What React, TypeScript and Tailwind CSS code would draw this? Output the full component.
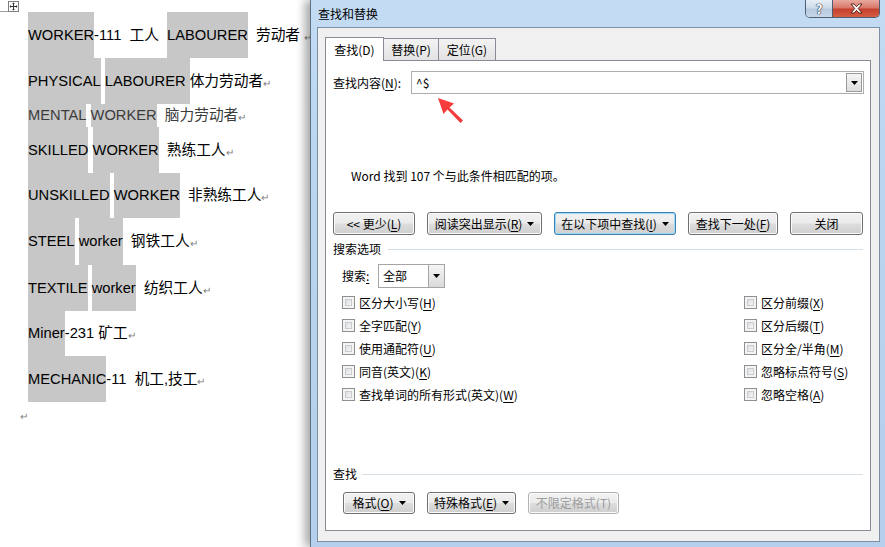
import clsx from "clsx";
import type { ReactNode } from "react";

type Part = [string, boolean];

const rows: { h: string; gray?: boolean; parts: Part[] }[] = [
  { h: "h-[46px]", parts: [["WORKER", true], ["-111  工人  ", false], ["LABOURER", true], ["  劳动者 ", false]] },
  { h: "h-[46px]", parts: [["PHYSICAL", true], [" ", false], ["LABOURER ", true], ["体力劳动者", false]] },
  { h: "h-[23px]", gray: true, parts: [["MENTAL", true], [" ", false], ["WORKER", true], ["  脑力劳动者", false]] },
  { h: "h-[46px]", parts: [["SKILLED", true], [" ", false], ["WORKER", true], ["  熟练工人", false]] },
  { h: "h-[45px]", parts: [["UNSKILLED", true], [" ", false], ["WORKER", true], ["  非熟练工人", false]] },
  { h: "h-[47px]", parts: [["STEEL", true], [" ", false], ["worker", true], ["  钢铁工人", false]] },
  { h: "h-[46px]", parts: [["TEXTILE", true], [" ", false], ["worker", true], ["  纺织工人", false]] },
  { h: "h-[45px]", parts: [["Miner", true], ["-231 矿工", false]] },
  { h: "h-[46px]", parts: [["MECHANIC", true], ["-11  机工,技工", false]] },
];

const Mark = () => <span className="translate-y-[2px] text-[10px] text-[#808080]">↵</span>;

const U = ({ c }: { c: string }) => <span className="underline underline-offset-[2px]">{c}</span>;

const Tri = () => (
  <svg width="7" height="4" viewBox="0 0 7 4" className="fill-black">
    <path d="M0 0h7L3.5 4z" />
  </svg>
);

function Btn({
  children,
  className,
  focused,
  disabled,
}: {
  children: ReactNode;
  className?: string;
  focused?: boolean;
  disabled?: boolean;
}) {
  return (
    <div
      className={clsx(
        "flex items-center justify-center gap-[5px] rounded-[3px] border bg-[linear-gradient(#f2f2f2,#ebebeb_48%,#dddddd_52%,#cfcfcf)] text-[12px] leading-[16px]",
        focused
          ? "border-[#3c7fb1] shadow-[inset_0_0_0_1px_#9bdcf9]"
          : "border-[#707070] shadow-[inset_0_0_0_1px_#fbfbfb]",
        disabled ? "border-[#adb2b5] text-[#9d9d9d]" : "text-black",
        className
      )}
    >
      {children}
    </div>
  );
}

function Check({ children }: { children: ReactNode }) {
  return (
    <div className="flex h-[23px] items-center gap-[4px]">
      <div className="h-[13px] w-[13px] border border-[#8e8f8f] bg-[#f4f4f4] p-[2px]">
        <div className="h-full w-full border border-[#c9cbcf] bg-[linear-gradient(135deg,#dcdee2,#f7f7f7)]" />
      </div>
      <span>{children}</span>
    </div>
  );
}

function Document() {
  return (
    <div className="h-[547px] w-[310px] shrink-0 overflow-hidden bg-white font-['Liberation_Sans','Noto_Sans_CJK_SC',sans-serif] text-[14.7px] text-black">
      <div className="flex h-[12px] items-start">
        <div className="mt-[11px] h-px w-[8px] bg-[#a0a0a0]" />
        <svg width="11" height="11" viewBox="0 0 11 11" className="mt-[1px]">
          <rect x="0.5" y="0.5" width="10" height="10" fill="white" stroke="#7f7f7f" />
          <path d="M5.5 2v7M2 5.5h7" stroke="#333" strokeWidth="1" />
          <path d="M5.5 1.5l-1.5 1.5h3zM5.5 9.5l-1.5-1.5h3zM1.5 5.5l1.5-1.5v3zM9.5 5.5l-1.5-1.5v3z" fill="#333" />
        </svg>
      </div>
      <div className="pl-[28px]">
        {rows.map((r, i) => (
          <div key={i} className={clsx("flex whitespace-pre", r.h, r.gray && "text-[#3c3c3c]")}>
            {r.parts.map(([t, hl], j) => (
              <span key={j} className={clsx("flex items-center", hl && "bg-[#c7c7c7]")}>
                <span className="whitespace-pre">{t}</span>
                {j === r.parts.length - 1 && <Mark />}
              </span>
            ))}
          </div>
        ))}
      </div>
      <div className="flex h-[24px] items-center pl-[20px]">
        <Mark />
      </div>
    </div>
  );
}

function Dialog() {
  return (
    <div className="relative flex h-[547px] w-[575px] shrink-0 flex-col border-l border-[#5d7189] bg-[linear-gradient(180deg,#c3dcf4,#bad3ee_40%,#b5cfec)] font-['Noto_Sans_CJK_SC','Noto_Sans',sans-serif] text-[12px] leading-[16px] text-black shadow-[-5px_0_9px_0_rgba(0,0,0,0.35)]">
      <div className="flex h-[27px] shrink-0 items-start">
        <div className="pl-[7px] leading-[27px]">查找和替换</div>
        <div className="ml-auto mr-[5px] flex h-[18px] overflow-hidden rounded-b-[5px] border border-t-0 border-[#4f5f74]">
          <div className="flex w-[27px] items-center justify-center border-r border-[#4f5f74] bg-[linear-gradient(#e6eef7,#cfdbe9_45%,#b8c9dd_55%,#c7d6e7)] text-[13px] font-bold leading-none text-white [text-shadow:0_0_1px_#1d2a3a,0_0_1px_#1d2a3a,0_0_1px_#1d2a3a]">
            ?
          </div>
          <div className="flex w-[46px] items-center justify-center bg-[linear-gradient(#e9a99f,#d9786b_45%,#c5412f_55%,#d65d42)]">
            <svg width="15" height="11" viewBox="0 0 15 11">
              <path
                d="M2 1h3l2.5 2.7L10 1h3L9.2 5.5 13 10h-3L7.5 7.3 5 10H2l3.8-4.5z"
                fill="white"
                stroke="#4a1810"
                strokeWidth="0.9"
                strokeLinejoin="round"
              />
            </svg>
          </div>
        </div>
      </div>
      <div className="mb-[5px] ml-[6px] mr-[5px] flex flex-1 flex-col border border-[#7e8ea3] bg-[#f0f0f0] pb-[10px] pl-[7px] pr-[8px] pt-[9px]">
        <div className="flex items-end">
          <div className="relative z-10 -mb-px flex h-[24px] w-[59px] items-center justify-center border border-b-0 border-[#898c95] bg-white">
            查找(D)
          </div>
          <div className="flex h-[22px] w-[55px] items-center justify-center border border-b-0 border-l-0 border-[#898c95] bg-[linear-gradient(#f3f3f3,#e3e3e3)]">
            替换(P)
          </div>
          <div className="flex h-[22px] w-[57px] items-center justify-center border border-b-0 border-l-0 border-[#898c95] bg-[linear-gradient(#f3f3f3,#e3e3e3)]">
            定位(G)
          </div>
        </div>
        <div className="relative flex flex-1 flex-col border border-[#898c95] bg-white pl-[7px] pr-[6px]">
          <div className="mt-[10px] flex h-[23px] items-center">
            <div className="w-[78px]">
              查找内容(<U c="N" />):
            </div>
            <div className="flex h-[23px] flex-1 items-center border border-[#abadb3] bg-white">
              <span className="pl-[4px]">^$</span>
              <div className="ml-auto mr-px flex h-[19px] w-[16px] items-center justify-center border border-[#9a9a9a] bg-[linear-gradient(#f5f5f5,#dedede)]">
                <Tri />
              </div>
            </div>
          </div>
          <svg width="32" height="32" viewBox="0 0 32 32" className="absolute left-[109px] top-[34px]">
            <path d="M3 3L19 8.5L14.5 12.5L28 25.5L25.5 28L12.5 14.5L8.5 19z" fill="#f53b3b" />
          </svg>
          <div className="mt-[74px] pl-[18px]">Word 找到 107 个与此条件相匹配的项。</div>
          <div className="mt-[28px] flex h-[23px] justify-between pr-px">
            <Btn className="w-[82px]">
              <span className="whitespace-pre">
                &lt;&lt; 更少(<U c="L" />)
              </span>
            </Btn>
            <Btn className="w-[115px]">
              <span>
                阅读突出显示(<U c="R" />)
              </span>
              <Tri />
            </Btn>
            <Btn className="w-[122px]" focused>
              <span>
                在以下项中查找(<U c="I" />)
              </span>
              <Tri />
            </Btn>
            <Btn className="w-[90px]">
              <span>
                查找下一处(<U c="F" />)
              </span>
            </Btn>
            <Btn className="w-[73px]">关闭</Btn>
          </div>
          <div className="mt-[6px] flex items-center gap-[7px] pr-px">
            <span>搜索选项</span>
            <div className="h-px flex-1 bg-[#d5dfe5]" />
          </div>
          <div className="mt-[7px] flex h-[24px] items-center pl-[9px]">
            <div className="w-[36px]">
              搜索<U c=":" />
            </div>
            <div className="flex h-[24px] w-[67px] items-center border border-[#a5a5a5] bg-white">
              <span className="pl-[4px]">全部</span>
              <div className="ml-auto flex h-full w-[16px] items-center justify-center border-l border-[#a5a5a5] bg-[linear-gradient(#f5f5f5,#dadada)]">
                <Tri />
              </div>
            </div>
          </div>
          <div className="mt-[3px] flex pl-[9px]">
            <div className="w-[402px]">
              <Check>
                区分大小写(<U c="H" />)
              </Check>
              <Check>
                全字匹配(<U c="Y" />)
              </Check>
              <Check>
                使用通配符(<U c="U" />)
              </Check>
              <Check>
                同音(英文)(<U c="K" />)
              </Check>
              <Check>
                查找单词的所有形式(英文)(<U c="W" />)
              </Check>
            </div>
            <div>
              <Check>
                区分前缀(<U c="X" />)
              </Check>
              <Check>
                区分后缀(<U c="T" />)
              </Check>
              <Check>
                区分全/半角(<U c="M" />)
              </Check>
              <Check>
                忽略标点符号(<U c="S" />)
              </Check>
              <Check>
                忽略空格(<U c="A" />)
              </Check>
            </div>
          </div>
          <div className="mt-[60px] flex items-center gap-[5px] pr-px">
            <span>查找</span>
            <div className="h-px flex-1 bg-[#d5dfe5]" />
          </div>
          <div className="mt-[10px] flex h-[22px] gap-[12px] pl-[10px]">
            <Btn className="w-[72px]">
              <span>
                格式(<U c="O" />)
              </span>
              <Tri />
            </Btn>
            <Btn className="w-[89px]">
              <span>
                特殊格式(<U c="E" />)
              </span>
              <Tri />
            </Btn>
            <Btn className="w-[91px]" disabled>
              不限定格式(T)
            </Btn>
          </div>
        </div>
      </div>
    </div>
  );
}

export default function App() {
  return (
    <div className="flex h-[547px] w-[885px] overflow-hidden bg-white">
      <Document />
      <Dialog />
    </div>
  );
}
